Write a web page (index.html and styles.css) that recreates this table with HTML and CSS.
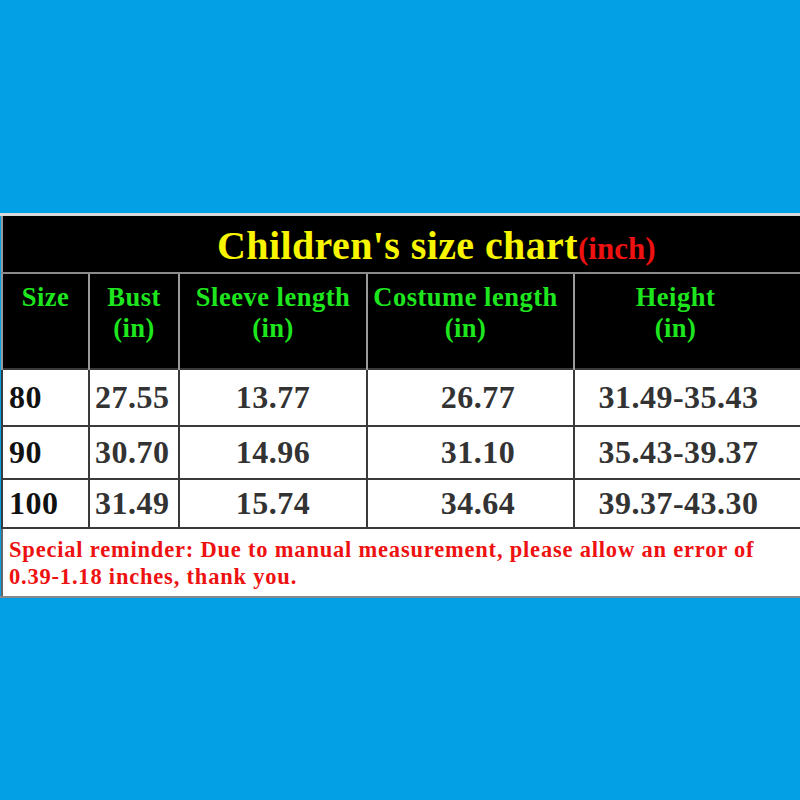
FILE: index.html
```html
<!DOCTYPE html>
<html>
<head>
<meta charset="utf-8">
<link rel="stylesheet" href="styles.css">
</head>
<body>
<div class="frame">
  <table class="chart">
    <colgroup>
      <col class="c1"><col class="c2"><col class="c3"><col class="c4"><col class="c5">
    </colgroup>
    <tr class="title-row">
      <td colspan="5" class="title"><span class="t-main">Children's size chart</span><span class="t-unit">(inch)</span></td>
    </tr>
    <tr class="head-row">
      <th>Size</th>
      <th>Bust<br>(in)</th>
      <th>Sleeve length<br>(in)</th>
      <th class="cost">Costume length<br>(in)</th>
      <th class="last">Height<br>(in)</th>
    </tr>
    <tr class="data-row r1">
      <td class="size">80</td>
      <td class="bust">27.55</td>
      <td>13.77</td>
      <td class="cost">26.77</td>
      <td class="last">31.49-35.43</td>
    </tr>
    <tr class="data-row r2">
      <td class="size">90</td>
      <td class="bust">30.70</td>
      <td>14.96</td>
      <td class="cost">31.10</td>
      <td class="last">35.43-39.37</td>
    </tr>
    <tr class="data-row r3">
      <td class="size">100</td>
      <td class="bust">31.49</td>
      <td>15.74</td>
      <td class="cost">34.64</td>
      <td class="last">39.37-43.30</td>
    </tr>
    <tr class="note-row">
      <td colspan="5" class="note">Special reminder: Due to manual measurement, please allow an error of<br>0.39-1.18 inches, thank you.</td>
    </tr>
  </table>
</div>
</body>
</html>
```

FILE: styles.css
```css
html, body {
  margin: 0;
  padding: 0;
  background: #04a0e6;
  height: 800px;
  overflow: hidden;
}
.frame {
  margin-top: 213px;
  width: 800px;
  overflow: hidden;
  border-top: 3px solid #d8d8d8;
  border-bottom: 2px solid #888;
}
.chart {
  width: 802px;
  border-collapse: collapse;
  table-layout: fixed;
  margin-left: 1px;
  font-family: "Liberation Serif", "Times New Roman", serif;
  font-weight: bold;
}
.c1 { width: 87px; }
.c2 { width: 90px; }
.c3 { width: 188px; }
.c4 { width: 207px; }
.c5 { width: 230px; }

.chart td, .chart th {
  padding: 0;
  border: 2px solid #444;
}
.title-row td {
  background: #000;
  height: 56px;
  border: 0;
  border-left: 2px solid #999;
  border-bottom: 2px solid #8a8a8a;
  padding: 0 0 0 214px;
  text-align: left;
  vertical-align: top;
}
.t-main {
  display: inline-block;
  color: #f8f500;
  font-size: 40px;
  line-height: 40px;
  padding-top: 10px;
  letter-spacing: 0.4px;
}
.t-unit {
  color: #ee1111;
  font-size: 31px;
  line-height: 31px;
}
.head-row th {
  background: #000;
  color: #1ee61e;
  font-size: 26.5px;
  line-height: 31px;
  letter-spacing: 0.5px;
  font-weight: bold;
  height: 96px;
  vertical-align: top;
  padding-top: 8px;
  box-sizing: border-box;
  border-color: #9a9a9a;
  border-top: 0;
  border-bottom: 0;
  text-align: center;
  white-space: nowrap;
}
.head-row th:first-child { border-left: 2px solid #999; }
.head-row th.cost { padding-right: 10px; }
.head-row th.last { padding-right: 28px; border-right: 0; }

.data-row td {
  background: #fff;
  color: #333;
  font-size: 32px;
  letter-spacing: 0.5px;
  text-align: center;
  vertical-align: middle;
  white-space: nowrap;
  border-color: #3a3a3a;
}
.data-row td.last { padding-right: 22px; border-right: 0; }
.data-row td.cost { padding-left: 15px; }
.data-row td.size {
  text-align: left;
  padding-left: 6px;
  color: #111;
}
.data-row td.bust {
  text-align: left;
  padding-left: 5px;
}
.r1 td { height: 55px; }
.r2 td { height: 51px; }
.r3 td { height: 47px; }

.note-row td.note {
  background: #fff;
  color: #ee1111;
  font-size: 22.5px;
  line-height: 27px;
  letter-spacing: 0.8px;
  height: 68px;
  text-align: left;
  vertical-align: top;
  padding: 7px 0 0 6px;
  box-sizing: border-box;
  border-bottom: 0;
  border-left: 2px solid #666;
  border-right: 0;
  white-space: nowrap;
}
```
